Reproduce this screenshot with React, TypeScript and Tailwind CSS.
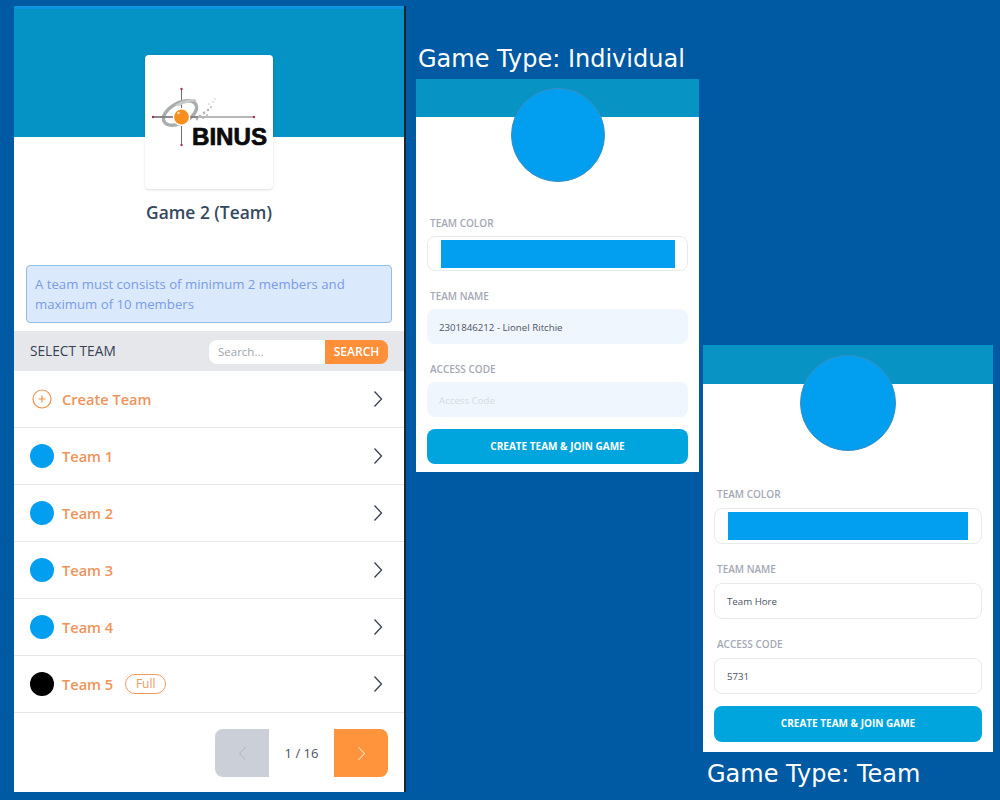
const FONT = "font-['Open_Sans','Noto_Sans',sans-serif]";

const teams = [
  { name: "Team 1", color: "bg-[#029ef0]" },
  { name: "Team 2", color: "bg-[#029ef0]" },
  { name: "Team 3", color: "bg-[#029ef0]" },
  { name: "Team 4", color: "bg-[#029ef0]" },
  { name: "Team 5", color: "bg-black", full: true },
];

function Chevron({ left, className }: { left?: boolean; className: string }) {
  return (
    <svg viewBox="0 0 10 18" className={className} fill="none" stroke="currentColor" strokeWidth="1.3">
      <path d={left ? "M8.5 1.5 1.5 9l7 7.5" : "M1.5 1.5 8.5 9l-7 7.5"} />
    </svg>
  );
}

function BinusLogo() {
  return (
    <svg viewBox="0 0 128 134" className="w-full h-full">
      <g stroke="#4f4650" strokeWidth="0.8">
        <path d="M36.5 34v56" />
        <path d="M8 62h101" />
      </g>
      <g fill="#a8324a">
        <circle cx="36.5" cy="34" r="1.2" />
        <circle cx="36.5" cy="90" r="1.2" />
        <circle cx="8" cy="62" r="1.2" />
        <circle cx="109" cy="62" r="1.2" />
      </g>
      <ellipse cx="35" cy="58" rx="18" ry="10" transform="rotate(-28 35 58)" fill="none" stroke="#a9adac" strokeWidth="3.4" />
      <path d="M30 50c6-4 13-6 20-6l2 2c-6 0-12 2-18 5Z" fill="#c9cccb" />
      <g fill="#b4b7b6">
        <circle cx="52" cy="64" r="1.4" />
        <circle cx="55" cy="61" r="1.5" />
        <circle cx="58" cy="63" r="1.1" />
        <circle cx="59" cy="58" r="1.4" />
        <circle cx="62" cy="60" r="1" />
        <circle cx="63" cy="55" r="1.2" />
        <circle cx="66" cy="52" r="0.9" />
        <circle cx="68" cy="47" r="0.7" />
        <circle cx="70" cy="44" r="0.7" />
        <circle cx="64" cy="49" r="0.7" />
      </g>
      <circle cx="36.5" cy="62" r="9" fill="#fff" />
      <path d="M8 62h20M45 62h8" stroke="#4f4650" strokeWidth="0.8" />
      <circle cx="36.5" cy="62" r="7.4" fill="#f7901e" />
      <circle cx="33.5" cy="58" r="1.2" fill="#ffe2bd" />
      <text x="47" y="90" className="font-['Liberation_Sans',sans-serif]" fontSize="24" fontWeight="700" fill="#0b0b0b" stroke="#0b0b0b" strokeWidth="0.7" textLength="75" lengthAdjust="spacingAndGlyphs">
        BINUS
      </text>
    </svg>
  );
}

function Row({ children }: { children: React.ReactNode }) {
  return (
    <div className="flex items-center justify-between h-[57px] pl-4 pr-[21px] border-b border-[#e5e7eb]">
      <div className="flex items-center">{children}</div>
      <Chevron className="w-[10px] h-[18px] text-[#374151]" />
    </div>
  );
}

function GamePanel() {
  return (
    <div className={`w-[390px] h-[786px] bg-white shadow-[2px_0_0_#1a2433] ${FONT}`}>
      <div className="h-[131px] bg-[#0592c4] border-t-[3px] border-[#0a94e2]" />
      <div className="flex flex-col items-center -mt-[82px]">
        <div className="w-[128px] h-[134px] bg-white rounded shadow-sm overflow-hidden">
          <BinusLogo />
        </div>
        <h1 className="mt-[11px] text-[17.4px] leading-[24px] font-semibold text-[#34495e]">Game 2 (Team)</h1>
      </div>
      <div className="mx-3 mt-[41px] h-[58px] px-2 py-2 rounded bg-[#dbe9fd] border border-[#93bce6] text-[13.2px] leading-[20px] text-[#7a9ce6]">
        A team must consists of minimum 2 members and maximum of 10 members
      </div>
      <div className="mt-2 h-10 bg-[#e5e7eb] flex items-center justify-between pl-4 pr-4">
        <span className="text-[13.7px] text-[#374151]">SELECT TEAM</span>
        <div className="flex h-6 mt-[1px]">
          <div className="w-[116px] bg-white rounded-l-lg pl-[9px] text-[11.5px] leading-6 font-medium text-[#9ca3af]">Search...</div>
          <div className="w-[63px] bg-[#ff8f38] rounded-r-lg text-center text-[12px] leading-6 font-semibold text-white">SEARCH</div>
        </div>
      </div>
      <Row>
        <span className="w-[24px] flex justify-center mr-[8px] mt-[1px]">
          <svg viewBox="0 0 20 20" className="w-5 h-5" fill="none" stroke="#ef9350" strokeWidth="1.2">
            <circle cx="10" cy="10" r="9" />
            <path d="M10 6.5v7M6.5 10h7" />
          </svg>
        </span>
        <span className="text-[14.6px] font-semibold text-[#f0935a] mt-[1px]">Create Team</span>
      </Row>
      {teams.map((t) => (
        <Row key={t.name}>
          <span className={`w-6 h-6 rounded-full ${t.color} mr-[8px]`} />
          <span className="text-[14.6px] font-semibold text-[#f0935a] mt-[1px]">{t.name}</span>
          {t.full && (
            <span className="ml-3 h-5 w-[41px] rounded-full border border-[#ee9a62] text-center text-[12px] leading-[18px] text-[#ee9a62]">Full</span>
          )}
        </Row>
      ))}
      <div className="mt-4 mr-4 flex justify-end">
        <div className="w-[54px] h-12 rounded-l-lg bg-[#cbd0d8] flex items-center justify-center">
          <Chevron left className="w-[9px] h-[15px] text-[#b3bac4]" />
        </div>
        <div className="w-[65px] text-center text-[13px] leading-12 font-medium text-[#4b5563]">1 / 16</div>
        <div className="w-[54px] h-12 rounded-r-lg bg-[#ff943c] flex items-center justify-center">
          <Chevron className="w-[9px] h-[15px] text-[#ffe0c0]" />
        </div>
      </div>
    </div>
  );
}

function Label({ children, className }: { children: React.ReactNode; className: string }) {
  return <div className={`text-[10px] leading-[14px] font-semibold text-[#a5a8b5] ${className}`}>{children}</div>;
}

function IndividualForm() {
  return (
    <div className={`w-[283px] h-[393px] bg-white ${FONT}`}>
      <div className="h-[38px] bg-[#0794c4]" />
      <div className="-mt-[29px] mx-auto w-[94px] h-[94px] rounded-full bg-[#029ef0] border border-[#3a8fc2]" />
      <div className="px-[11px]">
        <Label className="mt-[34px] ml-[3px]">TEAM COLOR</Label>
        <div className="mt-[6px] h-[35px] rounded-lg border border-[#e8eaee] flex items-center justify-center">
          <div className="w-[234px] h-[28px] bg-[#029ef0]" />
        </div>
        <Label className="mt-[18px] ml-[3px]">TEAM NAME</Label>
        <div className="mt-[6px] h-[35px] rounded-lg bg-[#f0f6fe] pl-3 text-[9.7px] leading-[37px] text-[#4b5563]">2301846212 - Lionel Ritchie</div>
        <Label className="mt-[18px] ml-[3px]">ACCESS CODE</Label>
        <div className="mt-[6px] h-[35px] rounded-lg bg-[#f0f6fe] pl-3 text-[9.7px] leading-[37px] text-[#d6dbe4]">Access Code</div>
        <div className="mt-3 h-[35px] rounded-lg bg-[#00a5de] text-center text-[10px] leading-[35px] font-bold text-white">CREATE TEAM &amp; JOIN GAME</div>
      </div>
    </div>
  );
}

function TeamForm() {
  return (
    <div className={`w-[290px] h-[407px] bg-white ${FONT}`}>
      <div className="h-[39px] bg-[#0794c4]" />
      <div className="-mt-[29px] mx-auto w-[96px] h-[96px] rounded-full bg-[#029ef0] border border-[#3a8fc2]" />
      <div className="px-[11px]">
        <Label className="mt-[36px] ml-[3px]">TEAM COLOR</Label>
        <div className="mt-[7px] h-[36px] rounded-lg border border-[#e8eaee] flex items-center justify-center">
          <div className="w-[240px] h-[28px] bg-[#029ef0]" />
        </div>
        <Label className="mt-[18px] ml-[3px]">TEAM NAME</Label>
        <div className="mt-[7px] h-[36px] rounded-lg border border-[#e8eaee] pl-3 text-[9.7px] leading-[36px] text-[#4b5563]">Team Hore</div>
        <Label className="mt-[18px] ml-[3px]">ACCESS CODE</Label>
        <div className="mt-[7px] h-[36px] rounded-lg border border-[#e8eaee] pl-3 text-[9.7px] leading-[36px] text-[#4b5563]">5731</div>
        <div className="mt-3 h-[36px] rounded-lg bg-[#00a5de] text-center text-[10px] leading-[35px] font-bold text-white">CREATE TEAM &amp; JOIN GAME</div>
      </div>
    </div>
  );
}

export default function App() {
  const titleFont = "font-['DejaVu_Sans',sans-serif] text-[24px] leading-[30px] text-white";
  return (
    <div className="w-[1000px] h-[800px] bg-[#0059a3] flex items-start overflow-hidden">
      <div className="ml-[14px] mt-[6px]">
        <GamePanel />
      </div>
      <div className="ml-[12px] mt-[44px]">
        <div className={`${titleFont} pl-[2px] h-[35px]`}>Game Type: Individual</div>
        <IndividualForm />
      </div>
      <div className="ml-[4px] mt-[345px]">
        <TeamForm />
        <div className={`${titleFont} pl-[4px] mt-[7px]`}>Game Type: Team</div>
      </div>
    </div>
  );
}
